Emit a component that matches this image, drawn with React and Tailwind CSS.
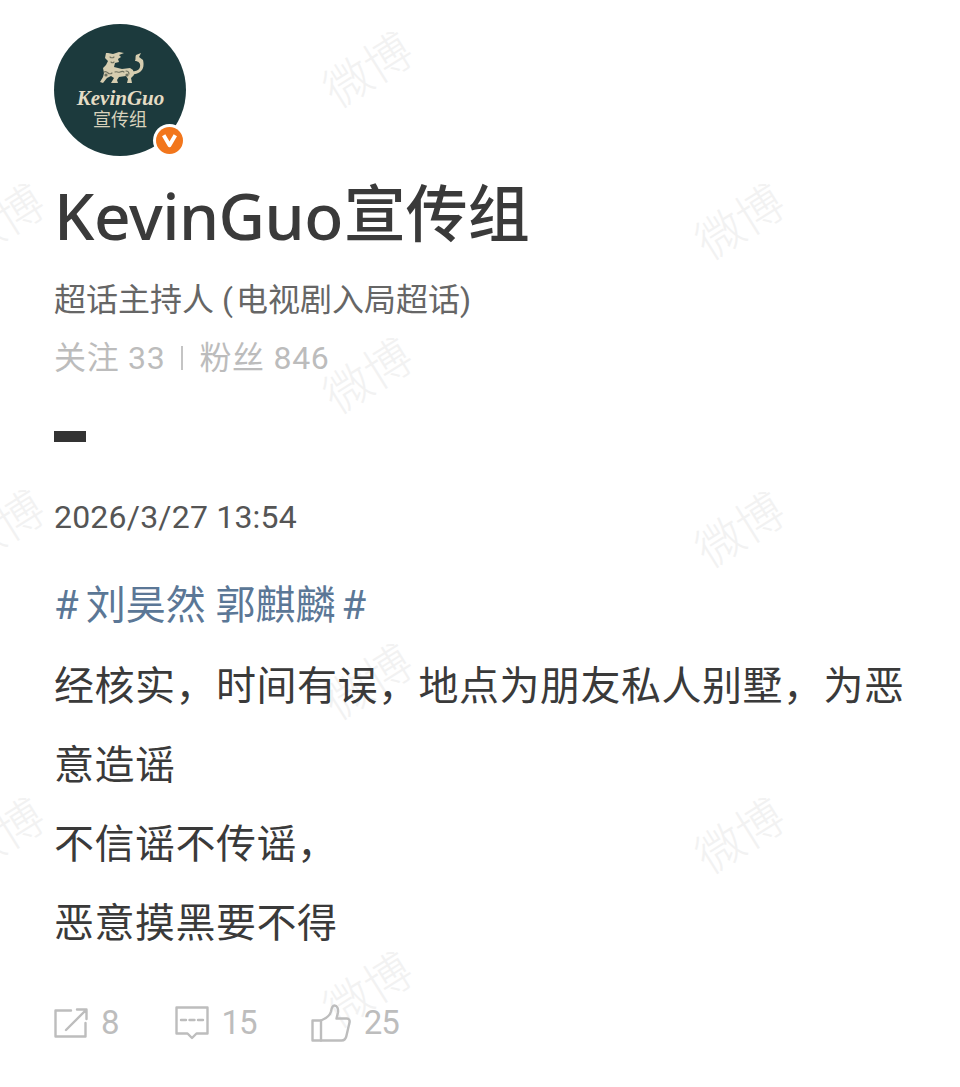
import React from "react";

const cjk = "font-['Roboto','Noto_Sans_CJK_SC',sans-serif]";

const marks = [
  "left-[322px] top-[32px]",
  "left-[694px] top-[184px]",
  "left-[-46px] top-[184px]",
  "left-[322px] top-[338px]",
  "left-[694px] top-[492px]",
  "left-[-46px] top-[490px]",
  "left-[322px] top-[644px]",
  "left-[694px] top-[798px]",
  "left-[-46px] top-[798px]",
  "left-[322px] top-[952px]",
];

function Watermark({ pos }) {
  return (
    <div
      className={`absolute ${pos} w-[92px] h-[76px] flex items-center justify-center -rotate-[32deg] text-[47px] leading-none font-light text-[#f2f2f2] whitespace-nowrap pointer-events-none`}
    >
      微博
    </div>
  );
}

function Qilin() {
  return (
    <svg viewBox="0 0 50 36" className="w-[50px] h-[36px]">
      {/* body, head and legs */}
      <path
        d="M14 2l5 1 6-2 5 1-5 2 2 2-3 2 1 3-4 1-1 4 8 2 8-1 3 2 1 5-3 3 1 5h-5l1-4-2-3-7 1-2 3 1 3h-7l3-5-3-2-4 2-4 5-3-1 3-5 1-4-1-5 3-3 2-4-3-3 1-5z"
        fill="#d6cdb0"
      />
      {/* tail */}
      <path
        d="M36 20c4 1 9 0 10-4s-2-6-5-6c1-2 0-4 1-6l5-2-2 4 4 3c1 4 1 9-3 12-3 2-7 3-11 2z"
        fill="#d6cdb0"
      />
      {/* markings */}
      <g fill="none" stroke="#6d705f" strokeWidth="1.1" strokeLinecap="round">
        <path d="M10 21c2-1 3 0 4 1s3 1 4 0M21 21c2-1 3 1 5 0s3-1 4 0M32 20c2 0 3 1 3 3" />
        <path d="M16 6c1 1 3 1 4 0M17 11c1 1 2 1 3 0" />
      </g>
      <circle cx="33" cy="24" r="1.6" fill="#6d705f" />
      <circle cx="12" cy="24" r="1.6" fill="#6d705f" />
    </svg>
  );
}

function Avatar() {
  return (
    <div className="relative w-[132px] h-[132px]">
      <div className="w-full h-full rounded-full bg-[#1c3a3d] flex flex-col items-center pt-[27px]">
        <div className="ml-[-2px]">
          <Qilin />
        </div>
        <span className="ml-[1px] text-[21px] leading-[22px] italic font-bold font-['Liberation_Serif',serif] text-[#e4dcc4] whitespace-nowrap">
          KevinGuo
        </span>
        <span className="text-[18px] leading-[18px] font-['Noto_Sans_CJK_SC',serif] text-[#d8d2bc] whitespace-nowrap">
          宣传组
        </span>
      </div>
      <div className="absolute left-[99px] top-[100px] w-[33px] h-[33px] rounded-full bg-white flex items-center justify-center">
        <div className="w-[27px] h-[27px] rounded-full bg-[#f2761c] flex items-center justify-center">
          <svg viewBox="0 0 16 16" className="w-[17px] h-[17px]">
            <path d="M2.5 3L8 12.5 13.5 3" fill="none" stroke="#fff" strokeWidth="3.6" strokeLinejoin="round" />
          </svg>
        </div>
      </div>
    </div>
  );
}

function ShareIcon() {
  return (
    <svg viewBox="0 0 34 30" className="w-[34px] h-[30px]" fill="none" stroke="#bdbdbd" strokeWidth="2.4" strokeLinecap="round" strokeLinejoin="round">
      <path d="M17 2.500H1.500v26h30V15" />
      <path d="M12 22L32 2M23 1.500h9.500V11" />
    </svg>
  );
}

function CommentIcon() {
  return (
    <svg viewBox="0 0 34 34" className="w-[34px] h-[34px]" fill="none" stroke="#bdbdbd" strokeWidth="2.4" strokeLinecap="round" strokeLinejoin="round">
      <path d="M1.500 1.500h31v26H21.500L17 32l-4.500-4.500H1.500z" />
      <path d="M6 14h5M14.500 14h5M23 14h5" />
    </svg>
  );
}

function LikeIcon() {
  return (
    <svg viewBox="0 0 40 38" className="w-[40px] h-[38px]" fill="none" stroke="#bdbdbd" strokeWidth="2.4" strokeLinecap="round" strokeLinejoin="round">
      <path d="M1.500 16.500h8.500v20H1.500z" />
      <path d="M10 16.500c5-2 9-5 10-9 .5-3 1-6 3.500-6s4 3 3.500 7l-1.500 6H36c2 0 3 2 2.500 4l-3 13c-.5 3-2 5-5 5H10" />
    </svg>
  );
}

function Stat({ icon, value, className }) {
  return (
    <div className={`flex items-center gap-[13px] ${className}`}>
      {icon}
      <span className="text-[33px] leading-[44px] tracking-[-1px] text-[#bdbdbd]">{value}</span>
    </div>
  );
}

export default function App() {
  return (
    <div className={`relative w-[960px] h-[1087px] bg-white overflow-hidden ${cjk}`}>
      {marks.map((pos) => (
        <Watermark key={pos} pos={pos} />
      ))}

      <div className="relative flex flex-col items-start pl-[54px] pr-[50px] pt-[24px]">
        <Avatar />
        <h1 className="mt-[22px] h-[76px] flex items-center font-medium text-[#3a3a3a] whitespace-nowrap">
          <span className="text-[64px] leading-[76px] tracking-[-0.5px] font-['Noto_Sans','Noto_Sans_CJK_SC',sans-serif]">KevinGuo</span>
          <span className="ml-[1px] text-[62px] leading-[76px]">宣传组</span>
        </h1>
        <p className="mt-[24px] text-[32px] leading-[44px] text-[#666666] whitespace-nowrap">
          超话主持人 <span className="mr-[3px]">(</span>电视剧入局超话)
        </p>
        <div className="mt-[14px] flex items-center text-[32px] leading-[44px] tracking-[0.7px] text-[#bcbcbc] whitespace-nowrap">
          <span>关注 33</span>
          <span className="mx-[16px] w-[2px] h-[24px] bg-[#c4c4c4]" />
          <span>粉丝 846</span>
        </div>
        <div className="mt-[51px] w-[32px] h-[11px] bg-[#333333]" />
        <p className="mt-[53px] text-[32px] leading-[44px] tracking-[0.2px] text-[#555555] whitespace-nowrap">
          2026/3/27 13:54
        </p>
        <p className="mt-[45px] text-[40px] leading-[44px] text-[#5b7796] whitespace-nowrap">
          <span className="mr-[7px]">#</span>刘昊然 郭麒麟<span className="ml-[6px]">#</span>
        </p>
        <div className="mt-[19px] text-[40px] leading-[79px] tracking-[0.5px] text-[#3a3a3a] w-full">
          <p>经核实，时间有误，地点为朋友私人别墅，为恶意造谣</p>
          <p>不信谣不传谣，</p>
          <p>恶意摸黑要不得</p>
        </div>
        <div className="mt-[38px] flex items-center">
          <Stat icon={<ShareIcon />} value="8" />
          <Stat icon={<CommentIcon />} value="15" className="ml-[56px]" />
          <Stat icon={<LikeIcon />} value="25" className="ml-[54px]" />
        </div>
      </div>
    </div>
  );
}
